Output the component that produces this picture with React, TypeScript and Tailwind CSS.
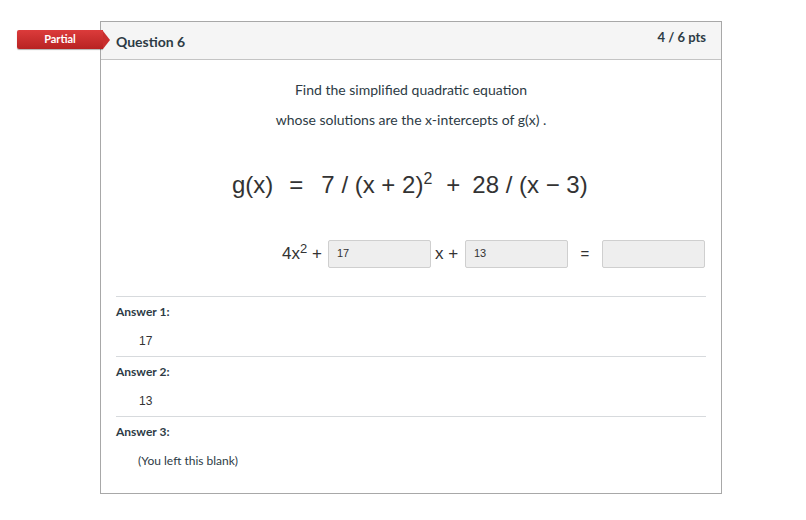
import React from "react";

const lato = { fontFamily: "Lato, 'Open Sans', sans-serif" };

const AnswerBlock = ({ label, value, blank }: { label: string; value: string; blank?: boolean }) => (
  <div className="border-t border-[#d7dadd]">
    <div className="pt-[6px] h-[29px] text-[12px] leading-[18px] font-bold text-[#2d3b45]">{label}</div>
    <div
      className={
        blank
          ? "pl-[22px] h-[30px] text-[12px] leading-[18px] text-[#2d3b45]"
          : "pl-[23px] h-[30px] text-[12px] leading-[18px] text-[#333] font-['Liberation_Sans',Arial,sans-serif]"
      }
    >
      <span className="relative top-[6px]">{value}</span>
    </div>
  </div>
);

const Blank = ({ value }: { value?: string }) => (
  <div className="w-[103px] h-[28px] shrink-0 bg-[#eeeeee] border border-[#cfcfcf] rounded-[2px] text-[11px] text-[#333] pl-[8px] pt-[6px] leading-[12px]">
    {value}
  </div>
);

export default function App() {
  return (
    <div className="w-[806px] h-[520px] bg-white relative" style={lato}>
      <div className="pt-[21px] pl-[100px]">
        <div className="w-[622px] h-[473px] border border-[#a8a8a8] relative">
          {/* header */}
          <div className="h-[38px] bg-[#f5f5f5] border-b border-[#c4c4c4] flex justify-between px-[15px]">
            <div className="pt-[9px] text-[14px] font-bold text-[#2d3b45]">Question 6</div>
            <div className="pt-[6px] text-[13px] font-bold text-[#2d3b45]">4 / 6 pts</div>
          </div>

          {/* badge */}
          <div className="absolute left-[-84px] top-[8px] flex items-center">
            <div className="w-[86px] h-[19px] rounded-l-[2px] bg-gradient-to-b from-[#dc3b3b] to-[#b82222] text-white text-[11px] font-bold flex items-center justify-center shadow-[0_1px_1px_rgba(0,0,0,0.3)]">
              Partial
            </div>
            <div className="w-0 h-0 border-y-[9.5px] border-y-transparent border-l-[7px] border-l-[#c92e2e]" />
          </div>

          {/* body */}
          <div className="px-[15px]">
            <div className="text-center text-[14px] text-[#2d3b45] mt-[20px] leading-[20px]">
              Find the simplified quadratic equation
            </div>
            <div className="text-center text-[14px] text-[#2d3b45] mt-[10px] leading-[20px]">
              whose solutions are the x-intercepts of g(x) .
            </div>

            <div className="flex mt-[39px] pl-[116px] text-[24px] text-[#333] leading-[32px] font-['Liberation_Sans',Arial,sans-serif]">
              <span>g(x)</span>
              <span className="ml-[16px]">=</span>
              <span className="ml-[18px]">
                7 / (x + 2)<sup className="text-[16px] relative top-[-9px]">2</sup>
              </span>
              <span className="ml-[14px]">+</span>
              <span className="ml-[12px]">28 / (x − 3)</span>
            </div>

            <div className="flex items-center mt-[39px] h-[28px] pl-[166px] text-[17px] text-[#333] font-['Liberation_Sans',Arial,sans-serif]">
              <span className="w-[46px] shrink-0">
                4x<sup className="text-[13px] relative top-[-6px]">2</sup> +
              </span>
              <Blank value="17" />
              <span className="w-[34px] shrink-0 pl-[4px]">x +</span>
              <Blank value="13" />
              <span className="w-[34px] shrink-0 text-center text-[15px]">=</span>
              <Blank />
            </div>

            <div className="mt-[28px]">
              <AnswerBlock label="Answer 1:" value="17" />
              <AnswerBlock label="Answer 2:" value="13" />
              <AnswerBlock label="Answer 3:" value="(You left this blank)" blank />
            </div>
          </div>
        </div>
      </div>
    </div>
  );
}
